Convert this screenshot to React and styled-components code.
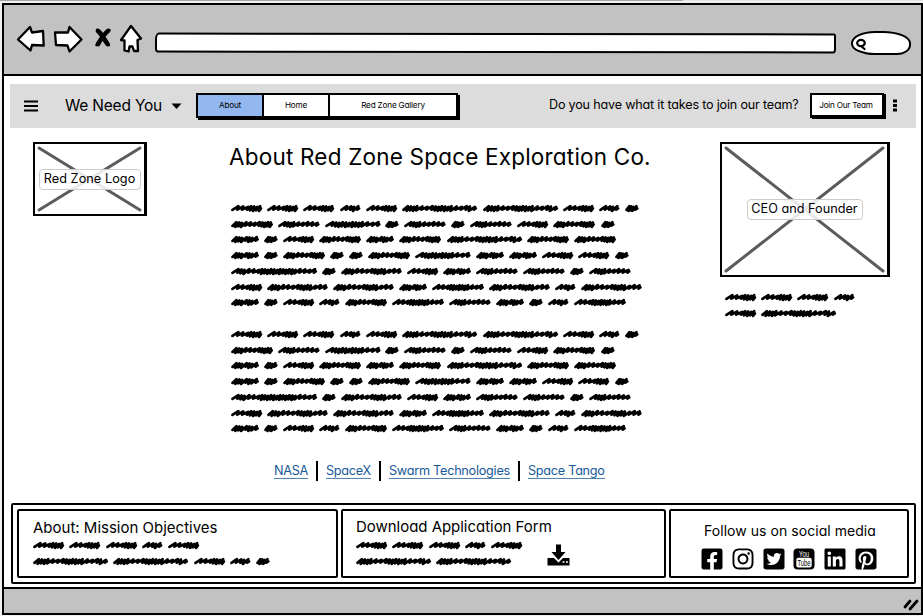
import React from "react";
import styled, { createGlobalStyle } from "styled-components";
import { FaFacebookSquare, FaInstagram, FaTwitterSquare, FaLinkedin, FaPinterestSquare } from "react-icons/fa";

const GlobalStyle = createGlobalStyle`
  *, *::before, *::after { box-sizing: border-box; }
  body {
    margin: 0;
    background: #fff;
    color: #000;
    font-family: Inter, "Open Sans", sans-serif;
    font-feature-settings: "cv11";
    overflow: hidden;
  }
`;

const Page = styled.div`
  width: 923px;
  height: 616px;
  padding-top: 3px;
  padding-left: 2px;
  background: linear-gradient(90deg, #a6a6a6 683px, #e4e4e4 683px) 0 0 / 100% 1px no-repeat, #f1f1f1;
`;

const Window = styled.div`
  width: 921px;
  height: 612px;
  display: flex;
  flex-direction: column;
  border: 2px solid #000;
  background: #fff;
`;

const Chrome = styled.header`
  height: 71px;
  flex: none;
  display: flex;
  align-items: flex-start;
  background: #c2c2c2;
  border-bottom: 2px solid #000;
`;

const ChromeIcons = styled.svg`
  width: 132px;
  height: 30px;
  margin: 19px 0 0 10px;
  fill: #fff;
  stroke: #000;
  stroke-width: 2.3;
  stroke-linejoin: round;
  stroke-linecap: round;
`;

const AddressBar = styled.div`
  width: 681px;
  height: 20px;
  margin: 28px 0 0 9px;
  background: #fff;
  border: 2px solid #000;
  border-radius: 4px 2px 3px 3px / 7px 3px 4px 4px;
  transform: rotate(0.08deg);
`;

const SearchField = styled.div`
  width: 60px;
  height: 24px;
  margin: 26px 0 0 15px;
  padding: 5px 0 0 2px;
  background: #fff;
  border: 2px solid #000;
  border-radius: 24px 28px 14px 24px / 12px 12px 10px 11px;
  svg { display: block; width: 12px; height: 13px; }
`;

const Content = styled.main`
  flex: 1;
  display: flex;
  flex-direction: column;
  padding: 8px 3px 0 6px;
`;

const Toolbar = styled.nav`
  width: 906px;
  height: 44px;
  flex: none;
  display: flex;
  align-items: flex-start;
  background: #dcdcdc;
`;

const Bars = styled.svg`
  width: 14px;
  height: 12px;
  margin: 16px 0 0 14px;
`;

const Text = styled.span`
  display: block;
  white-space: nowrap;
  font-size: ${(p) => p.$size}px;
  line-height: ${(p) => p.$line || 20}px;
  letter-spacing: ${(p) => p.$spacing || 0}px;
`;

const MenuTitle = styled.div`
  width: 98px;
  margin: 12px 0 0 27px;
`;

const Caret = styled.svg`
  width: 11px;
  height: 7px;
  margin: 19px 0 0 8px;
`;

const ButtonBar = styled.div`
  height: 25px;
  display: flex;
  margin: 9px 0 0 14px;
  border: 2px solid #000;
  background: #fff;
  box-shadow: 2px 2px 0 #000;
`;

const Segment = styled.button`
  width: ${(p) => p.$width}px;
  padding: 0;
  border: 0;
  border-right: ${(p) => (p.$last ? 0 : 2)}px solid #000;
  background: ${(p) => (p.$active ? "#93b8ef" : "#fff")};
  font: inherit;
  font-feature-settings: inherit;
  color: #000;
  display: flex;
  justify-content: center;
`;

const Question = styled.div`
  width: 251px;
  margin: 11px 0 0 91px;
`;

const JoinButton = styled.button`
  width: 74px;
  height: 25px;
  margin: 9px 0 0 10px;
  padding: 0 2px 0 0;
  border: 2px solid #000;
  border-bottom-width: 3px;
  background: #fff;
  color: #000;
  box-shadow: 2px 1px 0 #000;
  font: inherit;
  font-feature-settings: inherit;
  display: flex;
  justify-content: center;
`;

const Kebab = styled.svg`
  width: 4px;
  height: 13px;
  margin: 15px 0 0 9px;
`;

const Columns = styled.section`
  height: 375px;
  flex: none;
  display: flex;
  align-items: flex-start;
  padding-top: 14px;
`;

const Picture = styled.div`
  width: ${(p) => p.$width}px;
  height: ${(p) => p.$height}px;
  display: grid;
  place-items: center;
  border: 2px solid #000;
  border-right-width: 3px;
  > * { grid-area: 1 / 1; }
`;

const Cross = styled.svg`
  width: 100%;
  height: 100%;
  stroke: #5c5c5c;
  stroke-width: 3;
  stroke-linecap: round;
`;

const Caption = styled.div`
  width: ${(p) => p.$width}px;
  height: 21px;
  display: flex;
  justify-content: center;
  border: 1px solid #ccc;
  border-radius: 4px;
  background: rgba(255, 255, 255, 0.86);
`;

const LogoColumn = styled.aside`
  width: 219px;
  flex: none;
  padding-left: 23px;
`;

const Article = styled.article`
  width: 491px;
  flex: none;
`;

const Heading = styled.h1`
  margin: 1px 0 33px;
  font-weight: 400;
`;

const Founder = styled.aside`
  width: 170px;
  flex: none;
`;

const ScribbleBlock = styled.div`
  display: flex;
  flex-direction: column;
  margin: ${(p) => p.$margin || "0"};
`;

const ScribbleLine = styled.div`
  height: 15.77px;
  display: flex;
  align-items: center;
  gap: 5.2px;
  svg { display: block; overflow: visible; flex: none; }
`;

const Links = styled.div`
  display: flex;
  align-items: center;
  margin: 24px 0 0 45px;
`;

const Link = styled.a`
  width: ${(p) => p.$width}px;
  height: 17px;
  color: #17599a;
  border-bottom: 1px solid #4f83b5;
`;

const Separator = styled.i`
  width: 2px;
  height: 20px;
  margin: 0 8px;
  background: #000;
`;

const Panels = styled.section`
  width: 905px;
  height: 81px;
  flex: none;
  display: flex;
  align-items: flex-start;
  margin-left: 1px;
  padding: 4px 0 0 4px;
  gap: 3px;
  border: 2px solid #000;
  border-radius: 2px;
`;

const Panel = styled.div`
  width: ${(p) => p.$width}px;
  height: 69px;
  flex: none;
  display: flex;
  border: 2px solid #000;
  border-radius: 2px 3px 2px 2px;
  padding: ${(p) => p.$pad};
`;

const Social = styled.div`
  display: flex;
  flex-direction: column;
`;

const SocialIcons = styled.div`
  display: flex;
  margin: 6px 0 0 -4px;
  gap: 6.8px;
  svg { width: 24px; height: 24px; display: block; }
`;

const Download = styled.svg`
  width: 23px;
  height: 22px;
  margin: 27px 0 0 -5px;
`;

const StatusBar = styled.footer`
  height: 26px;
  flex: none;
  display: flex;
  justify-content: flex-end;
  background: #c2c2c2;
  border-top: 2px solid #000;
  svg { width: 17px; height: 14px; margin: 8px 2px 0 0; }
`;

/* Each word is a run of loose strokes (l) and tight strokes (m). */
const WORDS = {
  a: [13.7, "mmml"],
  b: [20.5, "llml"],
  c: [28, "mmmlmml"],
  d: [31.3, "lllmmmm"],
  e: [42, "mmmllllmmmm"],
  E: [41.7, "lmmmlllll"],
  f: [52, "lllmmmmmmmlll"],
  g: [55.7, "lmmmmmmmmmlll"],
  h: [60.8, "mmmllllmmmmlll"],
  i: [75.2, "mmmmlllmmmmmmlllml"],
  j: [86.2, "lmmlllmmmmmmmmmmmmllll"],
};

function Word({ kind }) {
  const [width, strokes] = WORDS[kind];
  const units = [...strokes].reduce((sum, s) => sum + (s === "l" ? 1.6 : 1), 0);
  const unit = (width - 4.8) / units;
  let x = 1.5;
  let d = "M1.5 5.9";
  [...strokes].forEach((s, n) => {
    const step = unit * (s === "l" ? 1.6 : 1);
    const top = 2.2 + (n % 3) * 0.35;
    const low = s === "l" ? 5.6 : 6.9 - (n % 2) * 0.6;
    d += `L${x + step + 1.1} ${top}L${x + step} ${low}`;
    x += step;
  });
  d += `L${width - 1.4} 4.4`;
  return (
    <svg width={width} height="9" viewBox={`0 0 ${width} 9`}>
      <path d={d} fill="none" stroke="#000" strokeWidth="2.75" strokeLinejoin="round" strokeLinecap="round" />
    </svg>
  );
}

function Scribble({ lines, margin }) {
  return (
    <ScribbleBlock $margin={margin}>
      {lines.map((line, n) => (
        <ScribbleLine key={n}>
          {[...line].map((kind, k) => <Word key={k} kind={kind} />)}
        </ScribbleLine>
      ))}
    </ScribbleBlock>
  );
}

const PARAGRAPH = ["dddbdiidba", "eEgaEaEdea", "cadeceiee", "caeaaegccdda", "jahdcEEaE", "dhhcfhbh", "cadbefEcabf"];

const LINKS = [
  ["NASA", 34, -0.3],
  ["SpaceX", 45, -0.3],
  ["Swarm Technologies", 121, -0.27],
  ["Space Tango", 77, -0.28],
];

function Placeholder({ width, height, caption, captionWidth, spacing }) {
  const w = width - 5;
  const h = height - 4;
  return (
    <Picture $width={width} $height={height}>
      <Cross viewBox={`0 0 ${w} ${h}`}>
        <path d={`M4 4L${w - 4} ${h - 4}M${w - 4} 4L4 ${h - 4}`} />
      </Cross>
      <Caption $width={captionWidth}>
        <Text $size={12.7} $line={18} $spacing={spacing}>{caption}</Text>
      </Caption>
    </Picture>
  );
}

function YouTubeIcon() {
  return (
    <svg viewBox="0 0 24 24" overflow="visible">
      <rect x="1.5" y="1.5" width="21" height="21" rx="4" />
      <text x="12" y="9.6" fill="#fff" fontFamily="Liberation Sans" fontSize="9" textAnchor="middle" textLength="10" lengthAdjust="spacingAndGlyphs">You</text>
      <rect x="4.3" y="10.8" width="15.4" height="9.6" rx="2" fill="#fff" />
      <text x="12" y="18.7" fontFamily="Liberation Sans" fontSize="9" textAnchor="middle" textLength="13" lengthAdjust="spacingAndGlyphs">Tube</text>
    </svg>
  );
}

export default function App() {
  return (
    <Page>
      <GlobalStyle />
      <Window>
        <Chrome>
          <ChromeIcons viewBox="14 24 132 30">
            <path d="M18 39.5L30 27L32 32.5L43 31L43.7 45.5L32 45L30.5 50.5Z" />
            <path d="M55 32.5L68 32.5L69.5 27L81.5 39.5L69.5 51.5L67.5 45.5L56 45Z" />
            <path d="M97 30C100 33 104 39 109 45M109.5 30C105 34 101 39 96.5 45" strokeWidth="2.5" />
            <path d="M98 31C101 33 104 39 107.5 44M108 31C104 34 101 39 98 44" strokeWidth="4.6" />
            <path d="M131 26L141 38.5L137.5 40L138 51L134 51L132.5 46.5L129.5 46.5L128.5 51.5L124.5 50.5L124.5 40.5L121 40Z" />
          </ChromeIcons>
          <AddressBar />
          <SearchField>
            <svg viewBox="0 0 12 13" fill="none" stroke="#000" strokeWidth="2.2" strokeLinecap="round">
              <ellipse cx="6" cy="5" rx="3.8" ry="3.2" />
              <path d="M6.5 8.5L9.5 11" />
            </svg>
          </SearchField>
        </Chrome>
        <Content>
          <Toolbar>
            <Bars viewBox="0 0 14 12"><path d="M0 1.5H14M0 6H14M0 10.5H14" stroke="#000" strokeWidth="2" /></Bars>
            <MenuTitle><Text $size={15.5} $spacing={-0.2}>We Need You</Text></MenuTitle>
            <Caret viewBox="0 0 11 7"><path d="M.5 .5H10.5L5.5 6Z" /></Caret>
            <ButtonBar>
              <Segment $width={66} $active><Text $size={8.2} $spacing={-0.25}>About</Text></Segment>
              <Segment $width={66}><Text $size={8.2} $spacing={-0.2}>Home</Text></Segment>
              <Segment $width={126} $last><Text $size={8.2} $spacing={-0.2}>Red Zone Gallery</Text></Segment>
            </ButtonBar>
            <Question><Text $size={12.6} $spacing={-0.19}>Do you have what it takes to join our team?</Text></Question>
            <JoinButton><Text $size={8.2} $spacing={-0.25}>Join Our Team</Text></JoinButton>
            <Kebab viewBox="0 0 4 13"><path d="M0 .5H4V3.5H0ZM0 5H4V8H0ZM0 9.5H4V12.5H0Z" /></Kebab>
          </Toolbar>
          <Columns>
            <LogoColumn>
              <Placeholder width={114} height={74} caption="Red Zone Logo" captionWidth={102} spacing={0.05} />
            </LogoColumn>
            <Article>
              <Heading><Text $size={22.5} $line={28} $spacing={0.2}>About Red Zone Space Exploration Co.</Text></Heading>
              <Scribble lines={PARAGRAPH} margin="-3.5px 0 0 1.5px" />
              <Scribble lines={PARAGRAPH} margin="15.5px 0 0 1.5px" />
              <Links>
                {LINKS.map(([label, width, spacing], n) => (
                  <React.Fragment key={label}>
                    {n > 0 && <Separator />}
                    <Link $width={width}><Text $size={12.7} $spacing={spacing} $line={17}>{label}</Text></Link>
                  </React.Fragment>
                ))}
              </Links>
            </Article>
            <Founder>
              <Placeholder width={170} height={135} caption="CEO and Founder" captionWidth={116} />
              <Scribble lines={["dddb", "di"]} margin="12.5px 0 0 4.5px" />
            </Founder>
          </Columns>
          <Panels>
            <Panel $width={321} $pad="7px 0 0 14px">
              <div>
                <Text $size={15}>About: Mission Objectives</Text>
                <Scribble lines={["dddbd", "iidba"]} margin="-0.5px 0 0" />
              </div>
            </Panel>
            <Panel $width={325} $pad="6px 0 0 13px">
              <div>
                <Text $size={15} $spacing={-0.03}>Download Application Form</Text>
                <Scribble lines={["dddbd", "ii"]} margin="0.5px 0 0" />
              </div>
              <Download viewBox="0 0 23 22">
                <path d="M9 .5H14V8H18.5L11.5 16L4.5 8H9ZM.5 14H7L11.5 18.5L16 14H22.5V21.5H.5Z" />
                <path d="M15.5 18H17.5M19 18H21" stroke="#fff" strokeWidth="1.5" />
              </Download>
            </Panel>
            <Panel $width={240} $pad="10px 0 0 33px">
              <Social>
                <Text $size={14} $spacing={0.05}>Follow us on social media</Text>
                <SocialIcons>
                  <FaFacebookSquare /><FaInstagram /><FaTwitterSquare /><YouTubeIcon /><FaLinkedin /><FaPinterestSquare />
                </SocialIcons>
              </Social>
            </Panel>
          </Panels>
        </Content>
        <StatusBar>
          <svg viewBox="0 0 17 14"><path d="M3 10L8 4M8 12L15 4" stroke="#000" strokeWidth="2.8" strokeLinecap="round" /></svg>
        </StatusBar>
      </Window>
    </Page>
  );
}
